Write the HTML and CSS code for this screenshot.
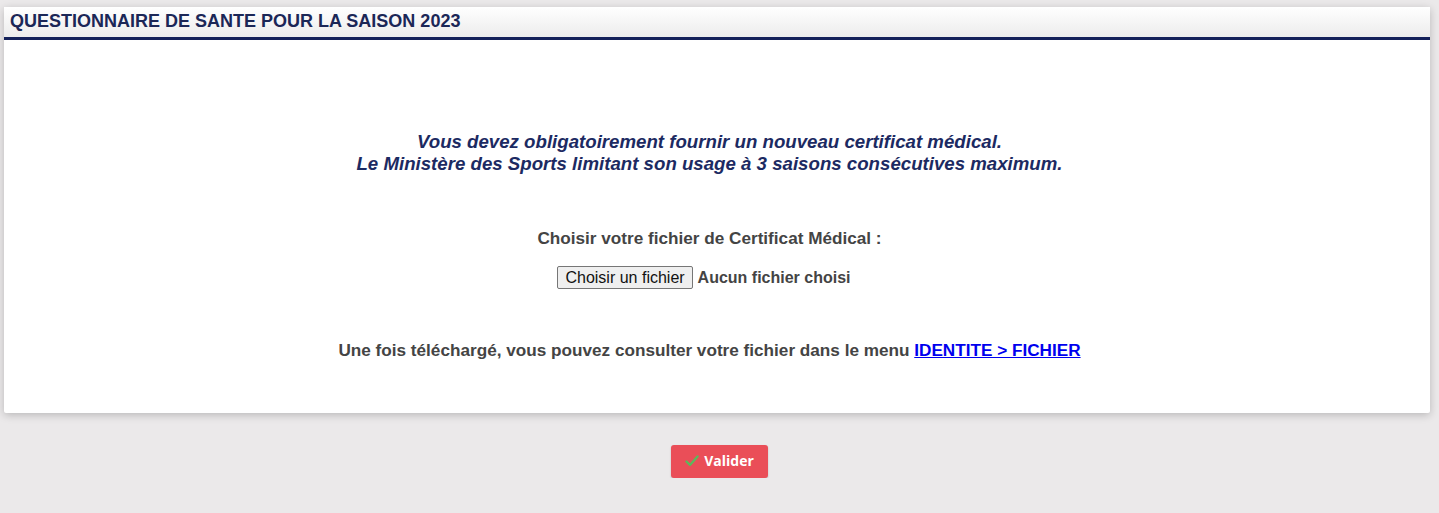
FILE: index.html
```html
<!DOCTYPE html>
<html lang="fr">

<head>
    <meta charset="UTF-8">
    <meta name="viewport" content="width=device-width, initial-scale=1.0">
    <title>Questionnaire de santé</title>
    <link rel="stylesheet" href="styles.css">
</head>

<body>
    <div class="panel">
        <div class="panel-header">QUESTIONNAIRE DE SANTE POUR LA SAISON 2023</div>
        <div class="panel-body">
            <p class="notice">
                Vous devez obligatoirement fournir un nouveau certificat médical.<br>
                Le Ministère des Sports limitant son usage à 3 saisons consécutives maximum.
            </p>
            <p class="file-label">Choisir votre fichier de Certificat Médical :</p>
            <div class="file-row">
                <label for="certUpload" class="file-button">Choisir un fichier</label>
                <input type="file" id="certUpload" style="display: none;">
                <span class="file-name" id="fileName">Aucun fichier choisi</span>
            </div>
            <p class="info">
                Une fois téléchargé, vous pouvez consulter votre fichier dans le menu
                <a href="#">IDENTITE &gt; FICHIER</a>
            </p>
        </div>
    </div>

    <div class="actions">
        <button class="btn-valider">
            <svg width="14" height="12" viewBox="0 0 14 12">
                <path d="M1.5 6.5 L5 10 L12.5 1.5" fill="none" stroke="#5cb85c" stroke-width="2.4" stroke-linecap="round" stroke-linejoin="round"/>
            </svg>
            Valider
        </button>
    </div>

    <script>
        document.getElementById('certUpload').addEventListener('change', function (event) {
            const file = event.target.files[0];
            document.getElementById('fileName').textContent = file ? file.name : 'Aucun fichier choisi';
        });
    </script>
</body>

</html>
```

FILE: styles.css
```css
body {
    margin: 0;
    background-color: #ebe9ea;
    font-family: "Liberation Sans", Arial, sans-serif;
}

.panel {
    margin: 7px 9px 0 4px;
    background-color: #fff;
    border-radius: 2px;
    box-shadow: 0 2px 8px rgba(0, 0, 0, 0.22);
}

.panel-header {
    height: 30px;
    padding-left: 6px;
    line-height: 29px;
    font-size: 18px;
    font-weight: bold;
    color: #1b2757;
    background: linear-gradient(#fff, #ececec);
    border-bottom: 3px solid #14215a;
}

.panel-body {
    padding: 91px 15px 53px 0;
    text-align: center;
}

.notice {
    margin: 0;
    font-size: 18.67px;
    line-height: 22px;
    font-weight: bold;
    font-style: italic;
    color: #1c2a62;
}

.file-label {
    margin: 54px 0 0;
    font-size: 17.17px;
    line-height: 19px;
    font-weight: bold;
    color: #444;
}

.file-row {
    display: flex;
    justify-content: center;
    align-items: center;
    gap: 5px;
    margin-top: 18px;
    padding-right: 11px;
}

.file-button {
    display: inline-block;
    box-sizing: border-box;
    height: 23px;
    padding: 0 7px;
    line-height: 21px;
    font-size: 16px;
    color: #111;
    background-color: #efefef;
    border: 1px solid #767676;
    border-radius: 2px;
    cursor: pointer;
}

.file-name {
    font-size: 16px;
    font-weight: bold;
    color: #444;
}

.info {
    margin: 52px 0 0;
    font-size: 17.17px;
    line-height: 19px;
    font-weight: bold;
    color: #444;
}

.info a {
    color: #0000ee;
}

.actions {
    display: flex;
    justify-content: center;
    margin-top: 32px;
}

.btn-valider {
    display: flex;
    align-items: center;
    gap: 5px;
    width: 97px;
    height: 33px;
    justify-content: center;
    padding: 0 0 2px;
    font-family: "Open Sans", sans-serif;
    font-size: 14px;
    font-weight: bold;
    color: #fff;
    background-color: #ea4e58;
    border: none;
    border-radius: 3px;
    box-shadow: 0 1px 2px rgba(0, 0, 0, 0.2);
    cursor: pointer;
}
```
